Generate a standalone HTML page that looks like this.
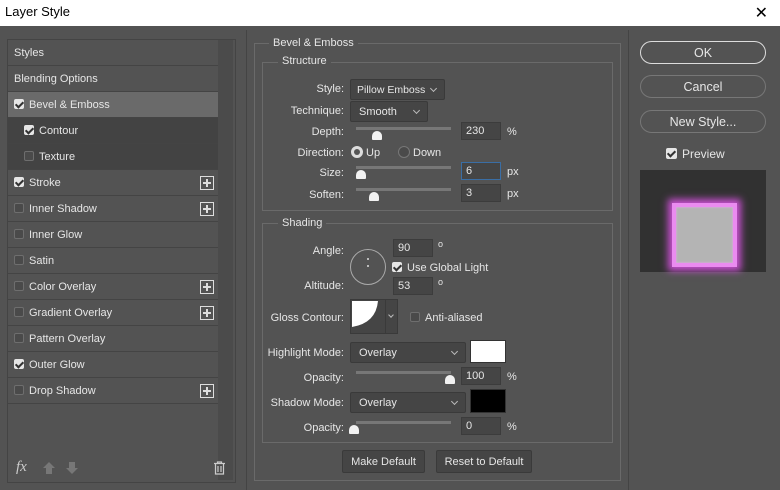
<!DOCTYPE html>
<html><head><meta charset="utf-8"><style>
*{margin:0;padding:0;box-sizing:border-box}
body{width:780px;height:490px;background:#535353;font-family:"Liberation Sans",sans-serif;font-size:11px;color:#e6e6e6;position:relative;overflow:hidden}
.a{position:absolute}
.title{left:0;top:0;width:780px;height:26px;background:#fff;color:#000;font-size:13px;padding:4px 0 0 5px}
.row{position:absolute;left:8px;width:210px;height:26px;border-bottom:1px solid #444;padding:7px 0 0 6px;background:#535353}
.cb{display:inline-block;width:10px;height:10px;border:1px solid #6e6e6e;border-radius:2px;vertical-align:-1px;margin-right:5px;background:#4a4a4a}
.cb.on{background:#e6e6e6;border-color:#e6e6e6;position:relative}
.cb.on:after{content:"";position:absolute;left:2px;top:0px;width:3px;height:6px;border:solid #333;border-width:0 2px 2px 0;transform:rotate(45deg)}
.plus{position:absolute;left:192px;top:6px;width:14px;height:14px;border:1px solid #ddd}
.plus:before{content:"";position:absolute;left:2px;top:5px;width:8px;height:2px;background:#ddd}
.plus:after{content:"";position:absolute;left:5px;top:2px;width:2px;height:8px;background:#ddd}
.box{position:absolute;border:1px solid #6a6a6a}
.lg{position:absolute;background:#535353;padding:0 4px;font-size:11px}
.lbl{position:absolute;text-align:right;width:100px}
.inp{position:absolute;background:#454545;border:1px solid #3c3c3c;height:18px;padding:2px 4px;font-size:11px}
.sel{position:absolute;background:#454545;border:1px solid #3a3a3a;border-radius:2px;height:21px;padding:4px 8px;font-size:11px}
.sel:after{content:"";position:absolute;right:8px;top:6px;width:4px;height:4px;border:solid #bbb;border-width:0 1px 1px 0;transform:rotate(45deg)}
.track{position:absolute;height:3px;background:#777}
.thumb{position:absolute;width:10px;height:9px;background:#f2f2f2;border-radius:5px 5px 1px 1px}
.btn{position:absolute;border:1px solid #777;border-radius:12px;height:23px;text-align:center;font-size:12.5px;padding-top:4px}
.gbtn{position:absolute;background:#454545;border:1px solid #3a3a3a;border-radius:2px;height:23px;text-align:center;padding-top:5px}
</style></head><body>
<div class="a title">Layer Style</div>
<div class="a" style="right:12px;top:3px;color:#000;font-size:16px">✕</div>

<div class="a" style="left:7px;top:39px;width:229px;height:444px;border:1px solid #444"></div>
<div class="a" style="left:218px;top:40px;width:15px;height:440px;background:#4b4b4b"></div>
<div class="row" style="top:40px">Styles</div>
<div class="row" style="top:66px">Blending Options</div>
<div class="row" style="top:92px;background:#6a6a6a"><span class="cb on"></span>Bevel &amp; Emboss</div>
<div class="row" style="top:118px;background:#434343;padding-left:16px"><span class="cb on"></span>Contour</div>
<div class="row" style="top:144px;background:#434343;padding-left:16px"><span class="cb"></span>Texture</div>
<div class="row" style="top:170px"><span class="cb on"></span>Stroke<div class="plus"></div></div>
<div class="row" style="top:196px"><span class="cb"></span>Inner Shadow<div class="plus"></div></div>
<div class="row" style="top:222px"><span class="cb"></span>Inner Glow</div>
<div class="row" style="top:248px"><span class="cb"></span>Satin</div>
<div class="row" style="top:274px"><span class="cb"></span>Color Overlay<div class="plus"></div></div>
<div class="row" style="top:300px"><span class="cb"></span>Gradient Overlay<div class="plus"></div></div>
<div class="row" style="top:326px"><span class="cb"></span>Pattern Overlay</div>
<div class="row" style="top:352px"><span class="cb on"></span>Outer Glow</div>
<div class="row" style="top:378px"><span class="cb"></span>Drop Shadow<div class="plus"></div></div>
<div class="a" style="left:16px;top:459px;font-style:italic;font-size:15px;color:#ccc;font-family:'Liberation Serif',serif">fx</div>
<div class="a" style="left:43px;top:462px;width:0;height:0;border:6px solid transparent;border-bottom-color:#777;border-top:0"></div>
<div class="a" style="left:46px;top:468px;width:6px;height:6px;background:#777"></div>
<div class="a" style="left:69px;top:462px;width:6px;height:6px;background:#777"></div>
<div class="a" style="left:66px;top:468px;width:0;height:0;border:6px solid transparent;border-top-color:#777;border-bottom:0"></div>
<svg class="a" style="left:213px;top:461px" width="13" height="14"><path d="M1 2.5H12M4.5 2.5V1H8.5V2.5M2.5 2.5V13H10.5V2.5M5 5V11M8 5V11" stroke="#ccc" fill="none" stroke-width="1.2"/></svg>

<div class="a" style="left:246px;top:30px;width:0;height:460px;border-left:1px solid #444"></div>
<div class="box" style="left:254px;top:43px;width:367px;height:438px"></div>
<div class="lg" style="left:269px;top:37px">Bevel &amp; Emboss</div>
<div class="box" style="left:262px;top:62px;width:351px;height:149px"></div>
<div class="lg" style="left:278px;top:55px">Structure</div>
<div class="lbl" style="left:244px;top:83px">Style:</div>
<div class="sel" style="left:350px;top:79px;width:95px;padding-left:6px;font-size:10.5px">Pillow Emboss</div>
<div class="lbl" style="left:244px;top:105px">Technique:</div>
<div class="sel" style="left:350px;top:101px;width:78px">Smooth</div>
<div class="lbl" style="left:244px;top:126px">Depth:</div>
<div class="track" style="left:356px;top:127px;width:95px"></div>
<div class="thumb" style="left:372px;top:131px"></div>
<div class="inp" style="left:461px;top:122px;width:40px">230</div><div class="a" style="left:507px;top:126px">%</div>
<div class="lbl" style="left:244px;top:147px">Direction:</div>
<div class="a" style="left:351px;top:146px;width:12px;height:12px;border-radius:6px;background:#ddd;border:3px solid #ddd"><div style="width:6px;height:6px;border-radius:3px;background:#555"></div></div>
<div class="a" style="left:366px;top:147px">Up</div>
<div class="a" style="left:398px;top:146px;width:12px;height:12px;border-radius:6px;border:1px solid #777;background:#4a4a4a"></div>
<div class="a" style="left:413px;top:147px">Down</div>
<div class="lbl" style="left:244px;top:167px">Size:</div>
<div class="track" style="left:356px;top:166px;width:95px"></div>
<div class="thumb" style="left:356px;top:170px"></div>
<div class="inp" style="left:461px;top:162px;width:40px;border-color:#3a6ea5">6</div><div class="a" style="left:507px;top:166px">px</div>
<div class="lbl" style="left:244px;top:189px">Soften:</div>
<div class="track" style="left:356px;top:188px;width:95px"></div>
<div class="thumb" style="left:369px;top:192px"></div>
<div class="inp" style="left:461px;top:184px;width:40px">3</div><div class="a" style="left:507px;top:188px">px</div>

<div class="box" style="left:262px;top:223px;width:351px;height:220px"></div>
<div class="lg" style="left:278px;top:217px">Shading</div>
<div class="lbl" style="left:244px;top:245px">Angle:</div>
<div class="a" style="left:350px;top:249px;width:36px;height:36px;border-radius:18px;border:1px solid #aaa"></div>
<div class="a" style="left:367px;top:258px;width:2px;height:2px;background:#bbb"></div>
<div class="a" style="left:367px;top:265px;width:2px;height:2px;background:#bbb"></div>
<div class="inp" style="left:393px;top:239px;width:40px">90</div><div class="a" style="left:438px;top:239px;font-size:9px">o</div>
<div class="a" style="left:392px;top:262px"><span class="cb on"></span>Use Global Light</div>
<div class="lbl" style="left:244px;top:280px">Altitude:</div>
<div class="inp" style="left:393px;top:277px;width:40px">53</div><div class="a" style="left:438px;top:277px;font-size:9px">o</div>
<div class="lbl" style="left:244px;top:312px">Gloss Contour:</div>
<div class="a" style="left:350px;top:299px;width:48px;height:35px;background:#454545;border:1px solid #3a3a3a"></div>
<svg class="a" style="left:352px;top:301px" width="28" height="30"><path d="M0 0H26Q24 22 0 26Z" fill="#fff"/></svg>
<div class="a" style="left:385px;top:299px;width:1px;height:35px;background:#3a3a3a"></div>
<div class="a" style="left:389px;top:313px;width:4px;height:4px;border:solid #bbb;border-width:0 1px 1px 0;transform:rotate(45deg)"></div>
<div class="a" style="left:410px;top:312px"><span class="cb"></span>Anti-aliased</div>
<div class="lbl" style="left:244px;top:347px">Highlight Mode:</div>
<div class="sel" style="left:350px;top:342px;width:116px">Overlay</div>
<div class="a" style="left:470px;top:340px;width:36px;height:23px;background:#fff;border:1px solid #333"></div>
<div class="lbl" style="left:244px;top:372px">Opacity:</div>
<div class="track" style="left:356px;top:371px;width:95px"></div>
<div class="thumb" style="left:445px;top:375px"></div>
<div class="inp" style="left:461px;top:367px;width:40px">100</div><div class="a" style="left:507px;top:371px">%</div>
<div class="lbl" style="left:244px;top:397px">Shadow Mode:</div>
<div class="sel" style="left:350px;top:392px;width:116px">Overlay</div>
<div class="a" style="left:470px;top:389px;width:36px;height:24px;background:#000;border:1px solid #333"></div>
<div class="lbl" style="left:244px;top:422px">Opacity:</div>
<div class="track" style="left:356px;top:421px;width:95px"></div>
<div class="thumb" style="left:349px;top:425px"></div>
<div class="inp" style="left:461px;top:417px;width:40px">0</div><div class="a" style="left:507px;top:421px">%</div>
<div class="gbtn" style="left:342px;top:450px;width:83px">Make Default</div>
<div class="gbtn" style="left:436px;top:450px;width:96px">Reset to Default</div>

<div class="a" style="left:628px;top:30px;width:0;height:460px;border-left:1px solid #444"></div>
<div class="btn" style="left:640px;top:41px;width:126px;border-color:#ddd">OK</div>
<div class="btn" style="left:640px;top:75px;width:126px">Cancel</div>
<div class="btn" style="left:640px;top:110px;width:126px">New Style...</div>
<div class="a" style="left:666px;top:147px;font-size:12px"><span class="cb on" style="width:11px;height:11px"></span>Preview</div>
<div class="a" style="left:640px;top:170px;width:126px;height:102px;background:#313131"></div>
<div class="a" style="left:672px;top:203px;width:65px;height:64px;background:#b4b4b4;border:4px solid #ea8bf0;box-shadow:0 0 7px 4px #c850d0,inset 0 0 2px #f0a0f5"></div>
</body></html>
